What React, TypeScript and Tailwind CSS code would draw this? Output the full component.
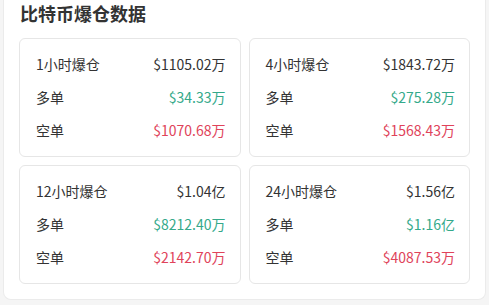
import React from "react";

type Row = { label: string; total: string; long: string; short: string };

const data: Row[] = [
  { label: "1小时爆仓", total: "$1105.02万", long: "$34.33万", short: "$1070.68万" },
  { label: "4小时爆仓", total: "$1843.72万", long: "$275.28万", short: "$1568.43万" },
  { label: "12小时爆仓", total: "$1.04亿", long: "$8212.40万", short: "$2142.70万" },
  { label: "24小时爆仓", total: "$1.56亿", long: "$1.16亿", short: "$4087.53万" },
];

function Card({ r }: { r: Row }) {
  return (
    <div className="border border-[#e6e6e6] rounded-[6px] bg-white pl-[16px] pr-[14px] py-[9px]">
      <div className="flex items-center justify-between h-[33px]">
        <span className="text-[#333]">{r.label}</span>
        <span className="text-[#333]">{r.total}</span>
      </div>
      <div className="flex items-center justify-between h-[33px]">
        <span className="text-[#333]">多单</span>
        <span className="text-[#34a98a]">{r.long}</span>
      </div>
      <div className="flex items-center justify-between h-[33px]">
        <span className="text-[#333]">空单</span>
        <span className="text-[#e0435a]">{r.short}</span>
      </div>
    </div>
  );
}

export default function App() {
  return (
    <div
      className="w-[489px] h-[305px] bg-[#f5f5f5] px-[3px] overflow-hidden"
      style={{ fontFamily: '"Noto Sans CJK SC", "Noto Sans", sans-serif' }}
    >
      <div className="bg-white border-x border-b border-[#ebebeb] rounded-b-[8px] px-[15px] pb-[15px] text-[14px]">
        <div className="h-[38px] pt-[1px]">
          <h1 className="text-[18px] leading-[24px] font-bold text-[#333] pl-[1px]">比特币爆仓数据</h1>
        </div>
        <div className="grid grid-cols-2 gap-[8px]">
          {data.map((r) => (
            <Card key={r.label} r={r} />
          ))}
        </div>
      </div>
    </div>
  );
}
